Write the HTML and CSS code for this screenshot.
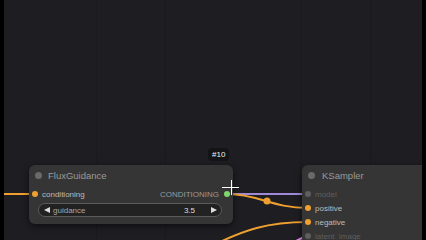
FILE: index.html
```html
<!DOCTYPE html>
<html lang="en">
<head>
    <meta charset="UTF-8">
    <meta name="viewport" content="width=device-width, initial-scale=1.0">
    <title>Workflow</title>
    <link rel="stylesheet" href="styles.css">
</head>
<body>
    <div class="canvas">
        <div class="grid-line" style="left: 96px"></div>
        <div class="grid-line" style="left: 165px"></div>
        <div class="grid-line" style="left: 300px"></div>
        <div class="grid-line" style="left: 370px"></div>

        <!-- links are drawn under the nodes -->
        <svg class="links" width="426" height="240" viewBox="0 0 426 240">
            <path d="M0 194 L35 194" stroke="#f0a030" stroke-width="2" fill="none"/>
            <path d="M228 194 L308 194" stroke="#a08ad8" stroke-width="2" fill="none"/>
            <path d="M228 194 C258 194 272 208 308 208" stroke="#f0a030" stroke-width="2" fill="none"/>
            <circle cx="267" cy="201" r="3.5" fill="#f0a030"/>
            <path d="M200 252 C245 228 270 222 308 222" stroke="#f0a030" stroke-width="2" fill="none"/>
            <path d="M294 242 L308 235" stroke="#e88ef0" stroke-width="2" fill="none"/>
        </svg>

        <div class="node flux">
            <div class="node-title"><span class="title-dot"></span>FluxGuidance</div>
            <div class="slot-row">
                <div class="slot"><span class="dot cond"></span>conditioning</div>
                <div class="slot out">CONDITIONING<span class="dot ok"></span></div>
            </div>
            <div class="widget">
                <span class="arrow left"></span>
                <span class="widget-name">guidance</span>
                <span class="widget-value">3.5</span>
                <span class="arrow right"></span>
            </div>
        </div>

        <div class="badge">#10</div>

        <div class="node sampler">
            <div class="node-title"><span class="title-dot"></span>KSampler</div>
            <div class="slot off"><span class="dot"></span>model</div>
            <div class="slot"><span class="dot cond"></span>positive</div>
            <div class="slot"><span class="dot cond"></span>negative</div>
            <div class="slot off"><span class="dot"></span>latent_image</div>
        </div>

        <div class="cursor"></div>
    </div>
</body>
</html>
```

FILE: styles.css
```css
body {
    margin: 0;
    background-color: #000;
    font-family: "Liberation Sans", Arial, sans-serif;
}

.canvas {
    position: relative;
    width: 426px;
    height: 240px;
    overflow: hidden;
    background-color: #1d1d22;
}

/* black strips on both sides of the canvas */
.canvas::before,
.canvas::after {
    content: "";
    position: absolute;
    top: 0;
    bottom: 0;
    width: 4px;
    background: #000;
    z-index: 5;
}
.canvas::before { left: 0; }
.canvas::after { right: 0; }

.grid-line {
    position: absolute;
    top: 0;
    bottom: 0;
    width: 1px;
    background: #1a1a1e;
}

.links {
    position: absolute;
    top: 0;
    left: 0;
}

.node {
    position: absolute;
    background-color: #353535;
    border-radius: 6px;
    box-shadow: 0 2px 6px rgba(0, 0, 0, 0.5);
}

.node.flux {
    left: 29px;
    top: 165px;
    width: 204px;
    height: 59px;
}

.node.sampler {
    left: 302px;
    top: 165px;
    width: 140px;
    height: 90px;
}

.node-title {
    height: 20px;
    display: flex;
    align-items: center;
    gap: 6px;
    padding-left: 6px;
    font-size: 9.5px;
    color: #9a9a9a;
}

.title-dot {
    width: 7px;
    height: 7px;
    border-radius: 50%;
    background: #6a6a6a;
}

.sampler .node-title {
    padding-left: 6px;
    gap: 7px;
}

.slot-row {
    height: 18px;
    display: flex;
    justify-content: space-between;
    align-items: center;
}

.slot {
    display: flex;
    align-items: center;
    gap: 4px;
    padding-left: 3px;
    height: 14px;
    font-size: 8px;
    color: #bcbcbc;
}

.sampler .slot:nth-child(2) {
    margin-top: 2px;
}

.slot.out {
    gap: 5px;
    padding-left: 0;
    padding-right: 3px;
    color: #9a9a9a;
}

.slot.off {
    color: #5e5e5e;
}

.dot {
    width: 6px;
    height: 6px;
    border-radius: 50%;
    background: #5e5e5e;
}

.dot.cond { background: #f0a030; }
.dot.ok { background: #7cd86a; }

.widget {
    margin: 0 11px 0 9px;
    height: 12px;
    display: flex;
    align-items: center;
    gap: 3px;
    padding: 0 4px 0 5px;
    background: #222;
    border: 1px solid #5a5a5a;
    border-radius: 7px;
    font-size: 8px;
    color: #c8c8c8;
}

.widget-name {
    flex: 1;
    color: #a8a8a8;
}

.widget-value {
    margin-right: 13px;
    color: #dcdcdc;
}

.arrow {
    width: 0;
    height: 0;
    border-top: 3.5px solid transparent;
    border-bottom: 3.5px solid transparent;
}
.arrow.left { border-right: 6px solid #ddd; }
.arrow.right { border-left: 6px solid #ddd; }

.badge {
    position: absolute;
    left: 208px;
    top: 148px;
    padding: 2px 4px;
    background: #141416;
    border-radius: 4px;
    font-size: 8px;
    color: #f0f0f0;
}

/* crosshair pointer over the output slot */
.cursor {
    position: absolute;
    left: 222px;
    top: 180px;
    width: 17px;
    height: 15px;
    z-index: 4;
    background:
        linear-gradient(#fff, #fff) 9px 0 / 1px 15px no-repeat,
        linear-gradient(#fff, #fff) 0 7px / 17px 1px no-repeat;
}
```
